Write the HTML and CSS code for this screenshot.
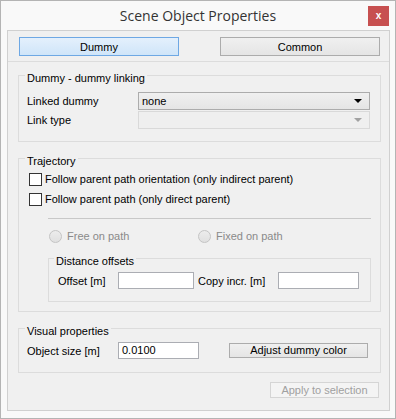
FILE: index.html
```html
<!DOCTYPE html>
<html lang="en">
<head>
    <meta charset="UTF-8">
    <title>Scene Object Properties</title>
    <link rel="stylesheet" href="styles.css">
</head>
<body>
<div class="window">
    <div class="titlebar">
        <span></span>
        <span class="title">Scene Object Properties</span>
        <span class="close">x</span>
    </div>
    <div class="content">
        <div class="tabs">
            <button class="tab active">Dummy</button>
            <button class="tab">Common</button>
        </div>
        <div class="panel">
            <fieldset class="group linking">
                <legend>Dummy - dummy linking</legend>
                <div class="form-row">
                    <span>Linked dummy</span>
                    <div class="combo">none</div>
                </div>
                <div class="form-row">
                    <span>Link type</span>
                    <div class="combo disabled"></div>
                </div>
            </fieldset>

            <fieldset class="group trajectory">
                <legend>Trajectory</legend>
                <label class="check"><span class="box"></span>Follow parent path orientation (only indirect parent)</label>
                <label class="check"><span class="box"></span>Follow parent path (only direct parent)</label>
                <div class="separator"></div>
                <div class="radios">
                    <label class="radio"><span class="dot"></span>Free on path</label>
                    <label class="radio"><span class="dot"></span>Fixed on path</label>
                </div>
                <fieldset class="group offsets">
                    <legend>Distance offsets</legend>
                    <div class="offset-row">
                        <span>Offset [m]</span>
                        <div class="input"></div>
                        <span class="copy-label">Copy incr. [m]</span>
                        <div class="input"></div>
                    </div>
                </fieldset>
            </fieldset>

            <fieldset class="group visual">
                <legend>Visual properties</legend>
                <div class="visual-row">
                    <span>Object size [m]</span>
                    <div class="input size-input">0.0100</div>
                    <button class="btn color-btn">Adjust dummy color</button>
                </div>
            </fieldset>

            <div class="footer">
                <button class="btn apply" disabled>Apply to selection</button>
            </div>
        </div>
    </div>
</div>
</body>
</html>
```

FILE: styles.css
```css
* {
    box-sizing: border-box;
}

body {
    margin: 0;
    font-family: "Liberation Sans", Arial, sans-serif;
    font-size: 11px;
    color: #000;
    background: #fff;
}

.window {
    width: 396px;
    height: 419px;
    border: 1px solid #b4b4b4;
    background: #f9f9f9;
    display: flex;
    flex-direction: column;
}

.titlebar {
    height: 29px;
    display: grid;
    grid-template-columns: 1fr auto 1fr;
    align-items: start;
}

.title {
    font-family: "Open Sans", sans-serif;
    font-size: 14px;
    color: #333;
    line-height: 29px;
}

.close {
    justify-self: end;
    width: 21px;
    height: 20px;
    margin: 5px 6px 0 0;
    background: #c75050;
    color: #fff;
    font-weight: bold;
    font-size: 10px;
    line-height: 19px;
    text-align: center;
}

/* 主内容区 */
.content {
    flex: 1;
    margin: 0 5px 7px 6px;
    border: 1px solid #d0d0d0;
    background: #f0f0f0;
}

.tabs {
    display: flex;
    gap: 41px;
    padding: 6px 0 5px 11px;
    border-bottom: 1px solid #dcdcdc;
}

button {
    font: inherit;
    color: inherit;
    margin: 0;
}

.tab {
    width: 160px;
    height: 19px;
    padding: 0;
    border: 1px solid #acacac;
    background: linear-gradient(#f0f0f0, #e5e5e5);
}

.tab.active {
    border-color: #6ea8e4;
    background: linear-gradient(#e4f0fc, #cfe5f9);
}

.panel {
    padding: 4px 8px 0 10px;
}

.group {
    margin: 0;
    min-width: 0;
    border: 1px solid #dcdcdc;
    padding: 0 9px 12px 8px;
}

.group legend {
    padding: 6px 2px 0;
    margin-left: -2px;
    line-height: 13px;
}

.form-row {
    display: grid;
    grid-template-columns: 111px 232px;
    align-items: center;
    height: 18px;
}

.linking {
    padding-top: 7px;
}

.linking .form-row + .form-row {
    margin-top: 1px;
}

.combo {
    position: relative;
    height: 18px;
    border: 1px solid #acacac;
    background: linear-gradient(#f0f0f0, #e5e5e5);
    padding-left: 3px;
    line-height: 16px;
}

.combo::after {
    content: "";
    position: absolute;
    right: 7px;
    top: 6px;
    border-left: 4px solid transparent;
    border-right: 4px solid transparent;
    border-top: 4px solid #000;
}

.combo.disabled {
    border-color: #d9d9d9;
    background: #efefef;
}

.combo.disabled::after {
    border-top-color: #a2a2a2;
}

.trajectory {
    margin-top: 7px;
    padding-top: 1px;
    padding-bottom: 9px;
}

.check {
    display: flex;
    align-items: center;
    height: 20px;
}

.box {
    width: 13px;
    height: 13px;
    margin: 0 3px 0 2px;
    border: 1px solid #333;
    background: #fff;
}

.separator {
    height: 1px;
    background: #c8c8c8;
    margin: 9px 0 0 21px;
}

.radios {
    display: grid;
    grid-template-columns: 149px auto;
    margin: 8px 0 0 22px;
    height: 18px;
    align-items: center;
}

.radio {
    display: flex;
    align-items: center;
    color: #8a8a8a;
}

.dot {
    width: 13px;
    height: 13px;
    margin-right: 5px;
    border: 1px solid #c4c4c4;
    border-radius: 50%;
    background: linear-gradient(#ececec, #e0e0e0);
}

.offsets {
    margin: 4px 0 0 21px;
    padding: 4px 10px 12px 9px;
}

.offsets legend {
    margin-left: -4px;
}

.offset-row {
    display: grid;
    grid-template-columns: 60px 76px 84px 81px;
    align-items: center;
}

.copy-label {
    padding-left: 4px;
}

.input {
    height: 17px;
    border: 1px solid #abadb3;
    background: #fff;
    padding-left: 3px;
    line-height: 15px;
}

.visual {
    margin-top: 7px;
    padding-top: 4px;
    padding-bottom: 13px;
}

.visual-row {
    display: grid;
    grid-template-columns: 91px 111px 139px;
    align-items: center;
}

.size-input {
    width: 81px;
}

.btn {
    height: 15px;
    padding: 0;
    border: 1px solid #acacac;
    background: linear-gradient(#f0f0f0, #e5e5e5);
    line-height: 13px;
}

.footer {
    display: flex;
    justify-content: flex-end;
    padding: 9px 2px 0 0;
}

.apply {
    width: 109px;
    height: 16px;
    border-color: #d5d5d5;
    background: #f4f4f4;
    color: #a0a0a0;
}
```
